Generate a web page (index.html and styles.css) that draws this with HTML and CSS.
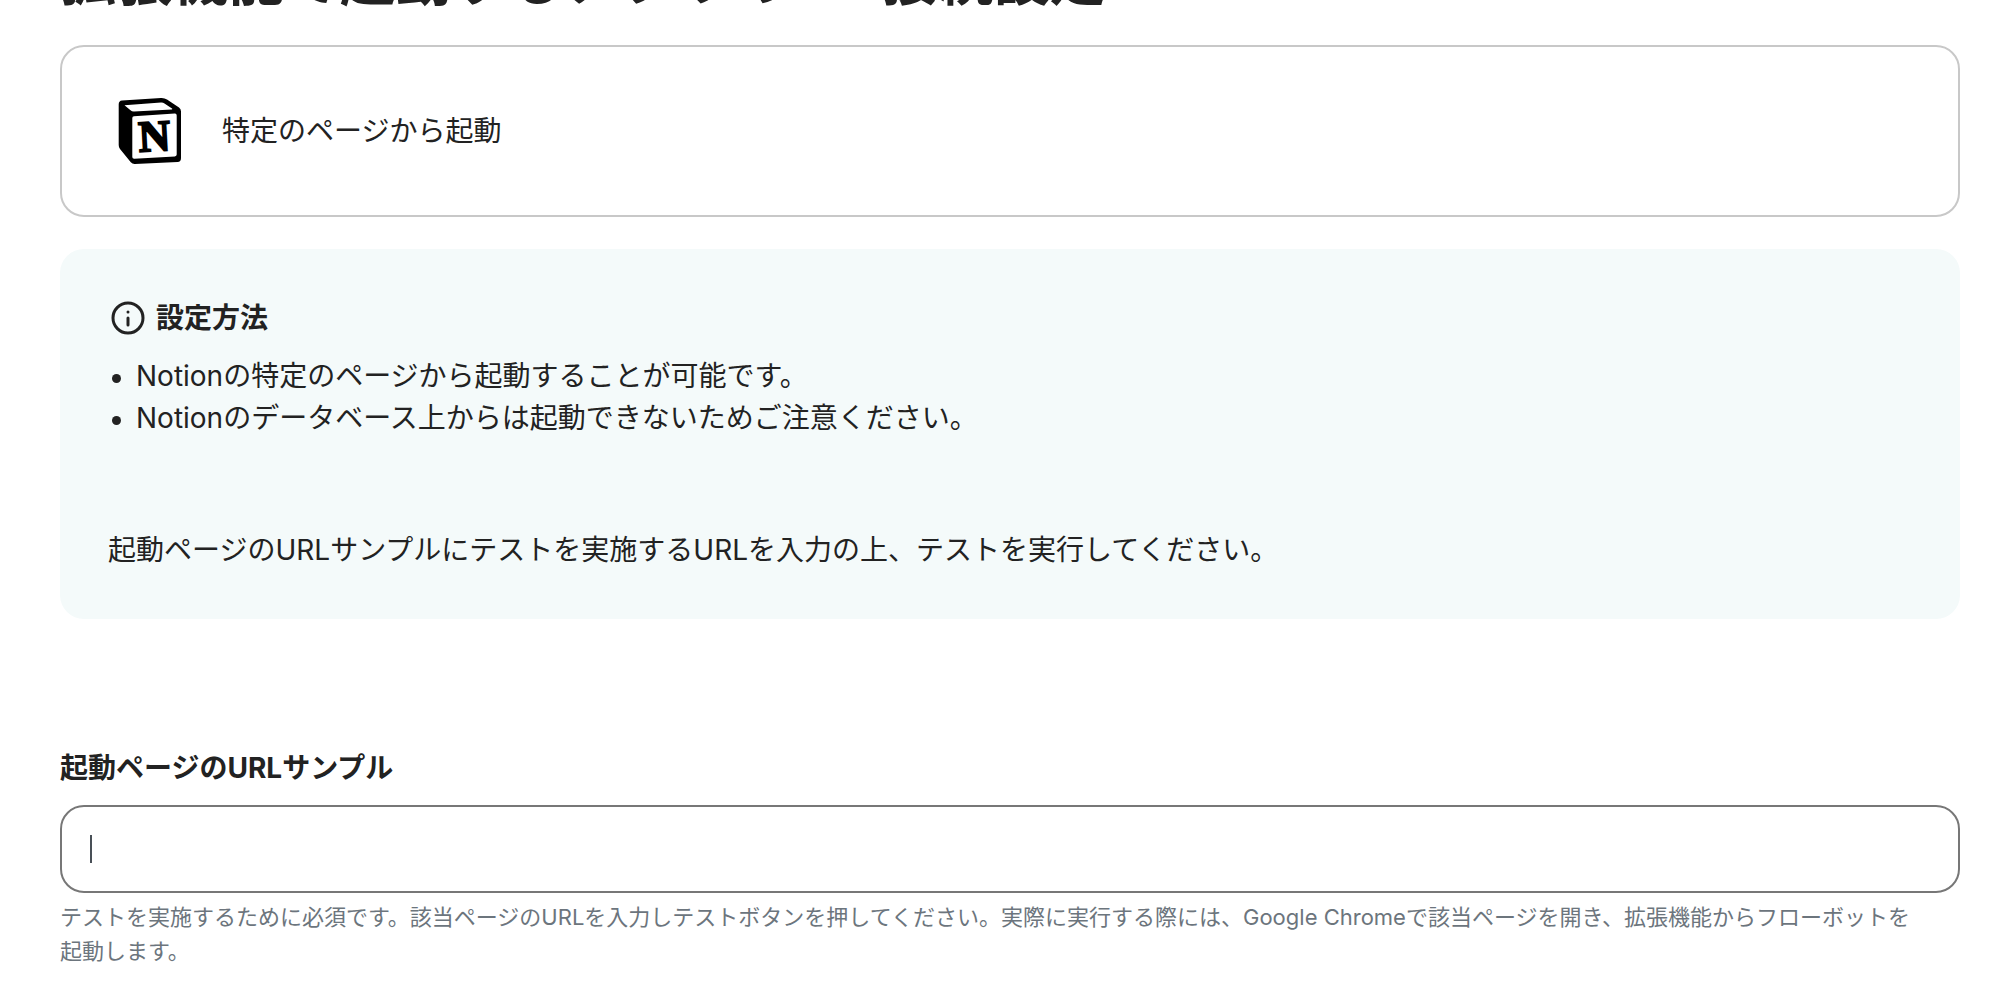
FILE: index.html
```html
<!DOCTYPE html>
<html lang="ja">
<head>
    <meta charset="UTF-8">
    <meta name="viewport" content="width=device-width, initial-scale=1.0">
    <title>アプリのAPI接続設定</title>
    <link rel="stylesheet" href="styles.css">
</head>
<body>

    <main class="container">
        <h1>拡張機能で起動するアプリのAPI接続設定</h1>

        <!-- Selected trigger -->
        <div class="trigger-card">
            <svg class="trigger-logo" viewBox="0 0 84 84" aria-hidden="true">
                <path d="M14 11.5 L53 9 Q56.500 8.800 59 10.500 L71 18.500 Q73 20 73 22.500 V69 Q73 72.800 69.500 73 L27 75 Q24.500 75.200 22.800 73.200 L12 60 Q10.700 58.300 10.700 56 V15.500 Q10.700 11.800 14 11.500 Z" fill="#000"/>
                <path d="M16.500 16.200 L53 13.500 Q55 13.400 56.500 14.400 L64 19.500 Q64.800 20.300 63.800 20.400 L26 22.500 Q24 22.600 22.500 21.300 Z" fill="#fff"/>
                <path d="M26 27.200 L66.800 24.600 Q68.700 24.500 68.700 26.500 V65.500 Q68.700 67.300 66.800 67.400 L26.300 69.800 Q24.300 69.900 24.300 68 V29 Q24.300 27.300 26 27.200 Z" fill="#fff"/>
                <text class="logo-letter" x="46.500" y="62" text-anchor="middle" transform="rotate(-3 46.5 48)">N</text>
            </svg>
            <p>特定のページから起動</p>
        </div>

        <!-- How to set up -->
        <section class="info">
            <h2>
                <svg class="info-icon" viewBox="0 0 40 40" aria-hidden="true">
                    <circle cx="20" cy="20" r="15" fill="none" stroke="currentColor" stroke-width="3"/>
                    <circle cx="20" cy="14" r="1.500" fill="currentColor"/>
                    <path d="M20 20 V27" stroke="currentColor" stroke-width="3" stroke-linecap="round"/>
                </svg>
                設定方法
            </h2>
            <ul>
                <li>Notionの特定のページから起動することが可能です。</li>
                <li>Notionのデータベース上からは起動できないためご注意ください。</li>
            </ul>
            <p>起動ページのURLサンプルにテストを実施するURLを入力の上、テストを実行してください。</p>
        </section>

        <!-- URL field -->
        <form class="field">
            <label for="page-url">起動ページのURLサンプル</label>
            <div class="input-wrap">
                <input type="text" id="page-url" name="page-url" aria-describedby="page-url-help">
                <span class="caret"></span>
            </div>
            <p class="help" id="page-url-help">テストを実施するために必須です。該当ページのURLを入力しテストボタンを押してください。実際に実行する際には、Google Chromeで該当ページを開き、拡張機能からフローボットを起動します。</p>
        </form>
    </main>

</body>
</html>
```
FILE: styles.css
```css
/* General Reset */
* {
    margin: 0;
    padding: 0;
    box-sizing: border-box;
}

body {
    font-family: Inter, "Noto Sans CJK JP", sans-serif;
    font-size: 28px;
    line-height: 42px;
    color: #222;
    background-color: #fff;
    overflow: hidden;
}

.container {
    padding: 0 50px 0 60px;
}

/* Heading is scrolled past the top edge */
h1 {
    margin-top: -62px;
    margin-bottom: 23px;
    font-size: 56px;
    line-height: 84px;
    font-weight: 700;
}

/* Trigger card */
.trigger-card {
    display: flex;
    align-items: center;
    gap: 30px;
    padding: 42px 46px;
    border: 2px solid #c8c8c8;
    border-radius: 24px;
}

.trigger-logo {
    width: 84px;
    height: 84px;
}

.logo-letter {
    font-family: "Liberation Serif", serif;
    font-size: 44px;
    font-weight: 700;
    stroke: #000;
    stroke-width: 2px;
}

/* Info box */
.info {
    margin-top: 32px;
    padding: 48px;
    border-radius: 24px;
    background-color: #f4fafa;
}

.info h2 {
    display: flex;
    align-items: center;
    gap: 8px;
    margin-bottom: 16px;
    font-size: 28px;
    font-weight: 700;
}

.info-icon {
    width: 40px;
    height: 40px;
}

.info ul {
    margin-bottom: 90px;
    list-style: none;
}

.info li {
    display: flex;
    align-items: center;
    gap: 15px;
    padding-left: 4px;
}

.info li::before {
    content: "";
    flex: none;
    width: 9px;
    height: 9px;
    margin-top: 5px;
    border-radius: 50%;
    background-color: #222;
}

/* URL field */
.field {
    margin-top: 128px;
}

.field label {
    display: block;
    margin-bottom: 16px;
    font-weight: 700;
}

.input-wrap {
    position: relative;
    margin-bottom: 7px;
}

.input-wrap input {
    display: block;
    width: 100%;
    height: 88px;
    padding: 0 28px;
    border: 2px solid #777;
    border-radius: 24px;
    font: inherit;
    color: #495057;
    background-color: #fff;
    outline: none;
}

.caret {
    position: absolute;
    top: 30px;
    left: 30px;
    width: 2px;
    height: 28px;
    background-color: #495057;
}

.help {
    padding-right: 32px;
    font-size: 22px;
    line-height: 34px;
    color: #6c757d;
}
```
